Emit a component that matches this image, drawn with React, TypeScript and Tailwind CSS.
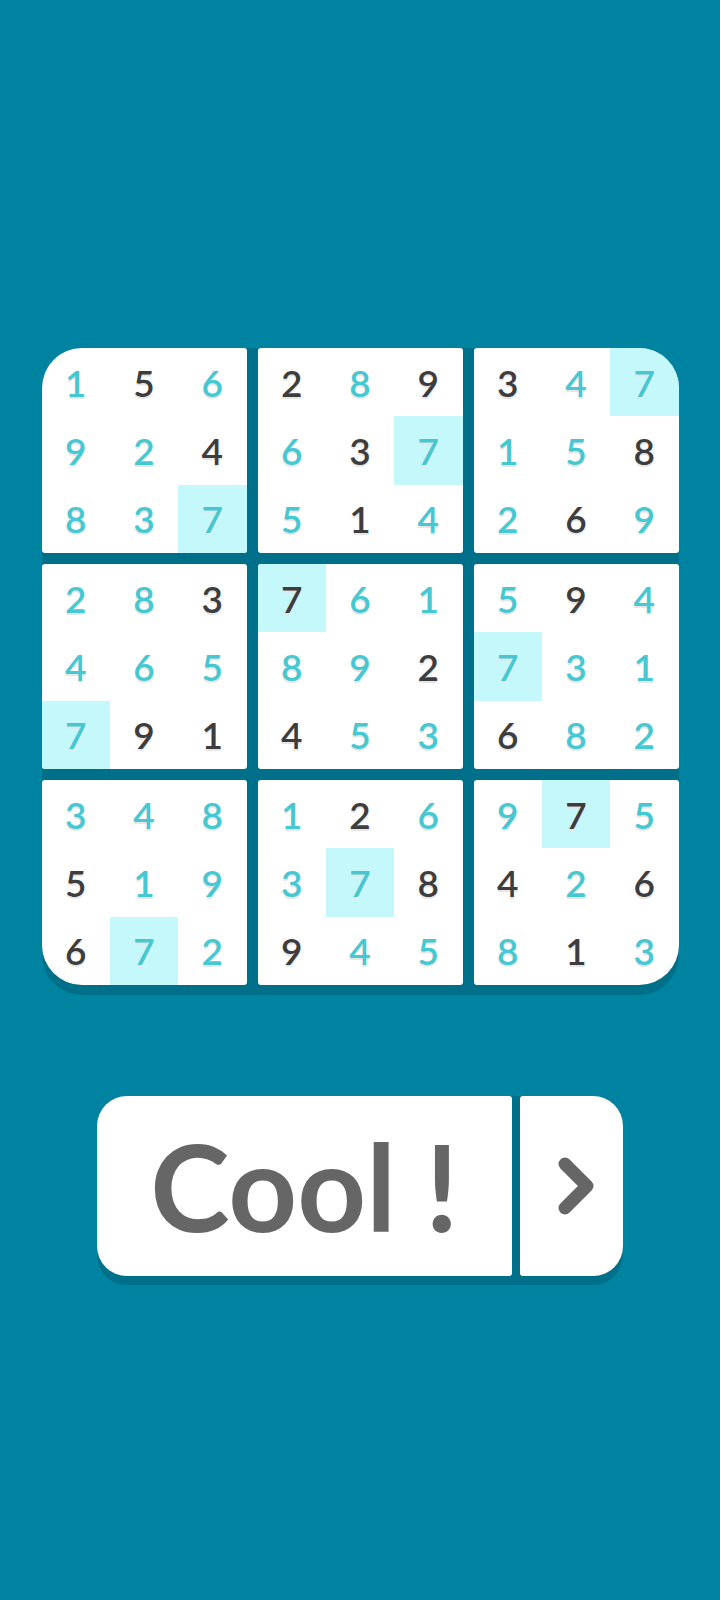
import type { JSX } from 'react'

// each box: 9 cells, "d" = given (dark), "*" = highlighted
const BOXES: string[] = [
  '1 5d 6 9 2 4d 8 3 7*',
  '2d 8 9d 6 3d 7* 5 1d 4',
  '3d 4 7* 1 5 8d 2 6d 9',
  '2 8 3d 4 6 5 7* 9d 1d',
  '7d* 6 1 8 9 2d 4d 5 3',
  '5 9d 4 7* 3 1 6d 8 2',
  '3 4 8 5d 1 9 6d 7* 2',
  '1 2d 6 3 7* 8d 9d 4 5',
  '9 7d* 5 4d 2 6d 8 1d 3',
]

const BOX_CORNERS = [
  'rounded-tl-[40px]',
  '',
  'rounded-tr-[40px]',
  '',
  '',
  '',
  'rounded-bl-[40px]',
  '',
  'rounded-br-[40px]',
]

function Cell({ token }: { token: string }): JSX.Element {
  const value = token.replace(/[d*]/g, '')
  const dark = token.includes('d')
  const hl = token.includes('*')
  return (
    <div
      className={`flex items-center justify-center text-[37px] font-semibold leading-none [text-shadow:0_2px_0_#e6e6e6] ${
        hl ? 'bg-[#c5f8fb]' : ''
      } ${dark ? 'text-[#3d3d3d]' : 'text-[#46c8d2]'}`}
    >
      {value}
    </div>
  )
}

export default function App(): JSX.Element {
  return (
    <div
      className="flex min-h-[1600px] w-full flex-col items-center bg-[#0083a0] pt-[348px]"
      style={{ fontFamily: 'Lato, "Open Sans", sans-serif' }}
    >
      <div className="grid w-[637px] grid-cols-3 gap-[11px] rounded-[40px] bg-[#00708a] shadow-[0_10px_0_#00708a]">
        {BOXES.map((box, i) => (
          <div
            key={i}
            className={`grid h-[205px] grid-cols-3 grid-rows-3 overflow-hidden rounded-[3px] bg-white ${BOX_CORNERS[i]}`}
          >
            {box.split(' ').map((t, j) => (
              <Cell key={j} token={t} />
            ))}
          </div>
        ))}
      </div>

      <div className="mt-[111px] flex h-[180px] gap-[8px] rounded-[30px] bg-[#00708a] shadow-[0_9px_0_#00708a]">
        <div className="flex w-[415px] items-center justify-center rounded-l-[30px] rounded-r-[3px] bg-white">
          <span className="text-[120px] font-bold leading-none text-[#666666]">Cool !</span>
        </div>
        <div className="flex w-[103px] items-center justify-center rounded-l-[3px] rounded-r-[30px] bg-white">
          <svg width="36" height="58" viewBox="0 0 36 58" className="ml-[8px]">
            <polyline
              points="7,7 29,29 7,51"
              fill="none"
              stroke="#666666"
              strokeWidth="13"
              strokeLinecap="round"
              strokeLinejoin="round"
            />
          </svg>
        </div>
      </div>
    </div>
  )
}
